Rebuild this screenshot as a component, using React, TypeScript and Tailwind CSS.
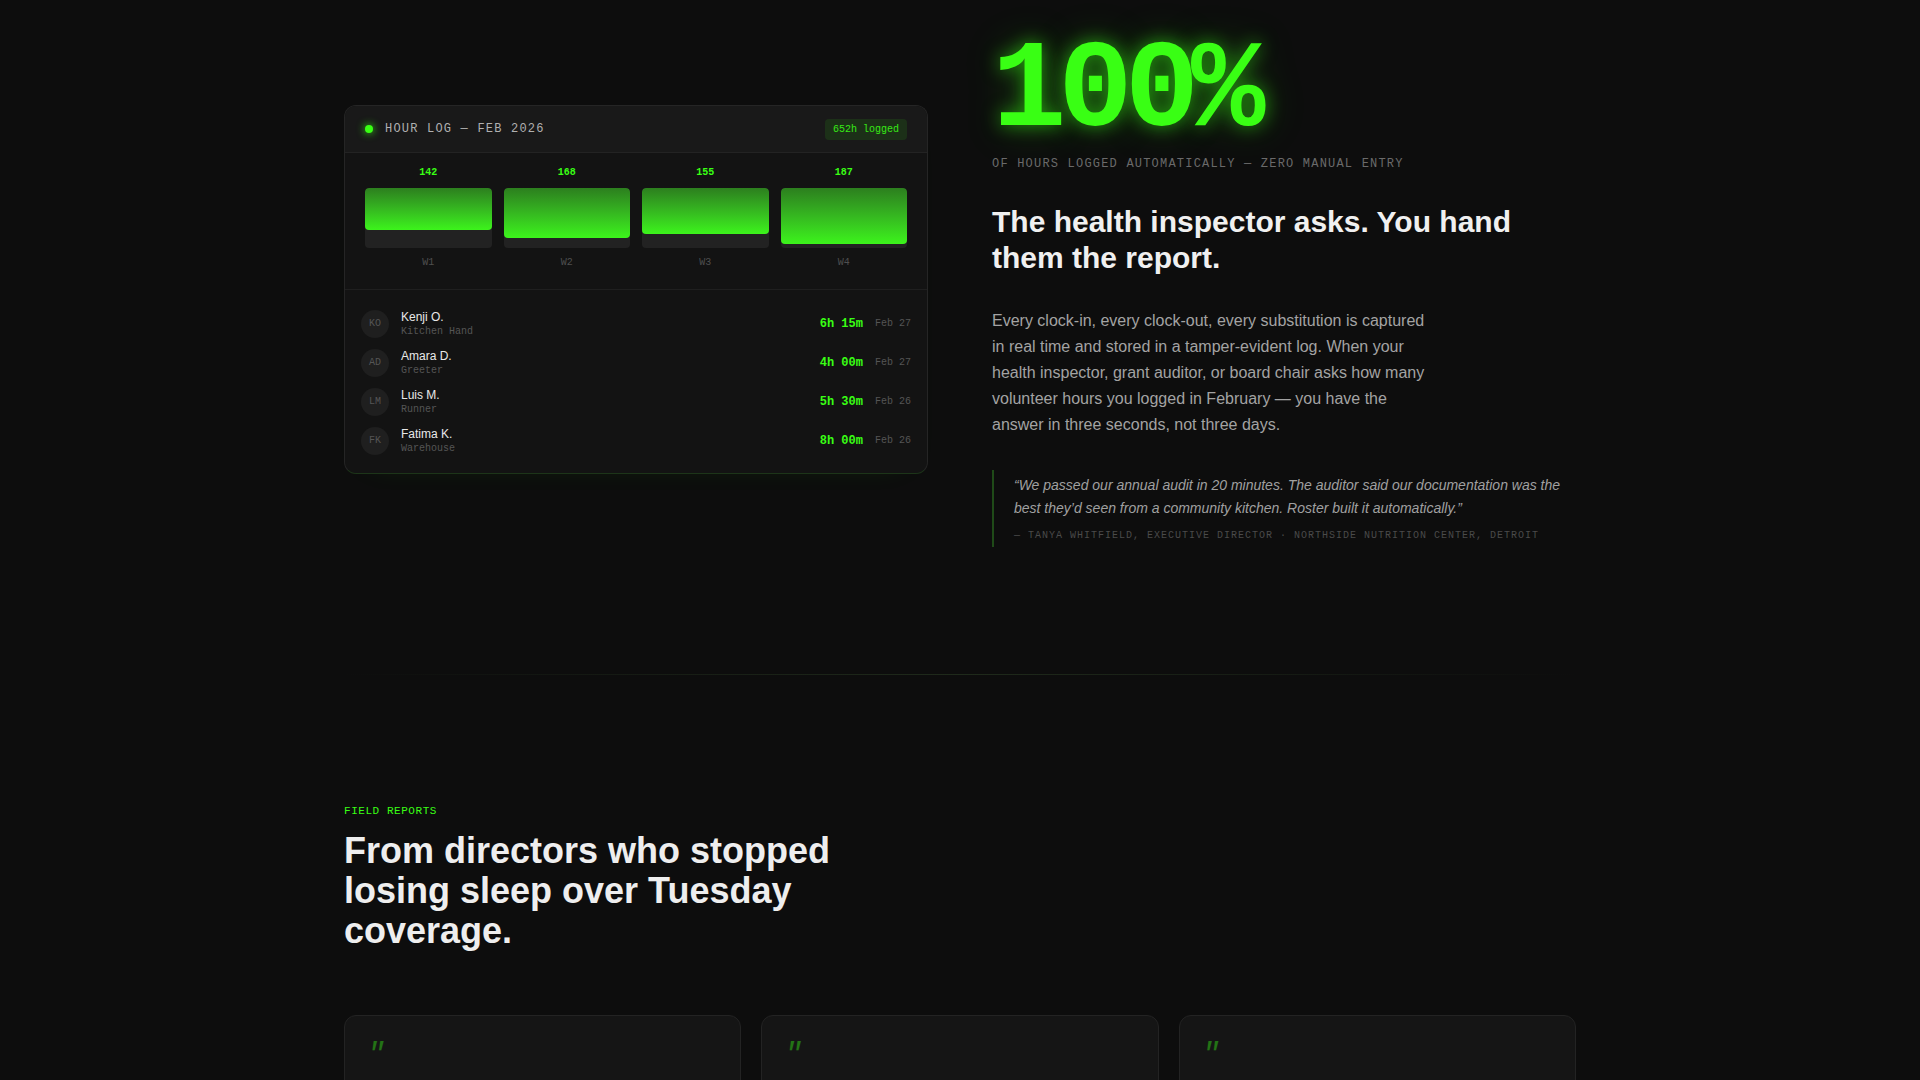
const mono = { fontFamily: '"Liberation Mono", "DejaVu Sans Mono", monospace' };

const weeks = [
  { label: "W1", value: 142 },
  { label: "W2", value: 168 },
  { label: "W3", value: 155 },
  { label: "W4", value: 187 },
];

const entries = [
  { initials: "KO", name: "Kenji O.", role: "Kitchen Hand", hours: "6h 15m", date: "Feb 27" },
  { initials: "AD", name: "Amara D.", role: "Greeter", hours: "4h 00m", date: "Feb 27" },
  { initials: "LM", name: "Luis M.", role: "Runner", hours: "5h 30m", date: "Feb 26" },
  { initials: "FK", name: "Fatima K.", role: "Warehouse", hours: "8h 00m", date: "Feb 26" },
];

const reports = [
  {
    quote: "We used to spend Monday nights texting twenty people to fill three shifts. Now the gaps fill themselves before I even see them.",
    who: "Marcus Bell",
    org: "Eastside Community Pantry",
  },
  {
    quote: "Our no-show rate dropped by half in the first month. Volunteers actually like getting the reminders.",
    who: "Priya Raman",
    org: "Harbor Meals Collective",
  },
  {
    quote: "Tuesday used to be the shift nobody wanted. Roster found us a standing crew in two weeks.",
    who: "Dolores Vega",
    org: "St. Anne's Soup Kitchen",
  },
];

function HourLogCard() {
  return (
    <div className="mt-[2px] rounded-xl border border-[#252525] border-b-[#1d3519] bg-[#131313] overflow-hidden shadow-[0_12px_30px_-26px_rgba(57,255,20,0.15)]">
      {/* header */}
      <div className="flex h-[47px] items-center justify-between border-b border-[#232323] bg-[#191919] px-5">
        <div className="flex items-center gap-3">
          <span className="h-2 w-2 rounded-full bg-[#39ff14] shadow-[0_0_8px_#39ff14]" />
          <span className="text-xs tracking-widest text-[#b0b0b0]" style={mono}>
            HOUR LOG — FEB 2026
          </span>
        </div>
        <span
          className="mt-0.5 rounded bg-[#39ff14]/10 px-2 py-[3px] text-[10px] leading-[15px] text-[#39ff14]/90"
          style={mono}
        >
          652h logged
        </span>
      </div>

      {/* weekly bars */}
      <div className="grid grid-cols-4 gap-3 border-b border-[#1f1f1f] px-5 pt-[13px] pb-[19px]">
        {weeks.map((w) => (
          <div key={w.label} className="flex flex-col items-center">
            <span className="text-[10px] leading-[14px] font-bold text-[#39ff14]" style={mono}>
              {w.value}
            </span>
            <div className="mt-2 h-[60px] w-full overflow-hidden rounded bg-[#222222]">
              <div
                className="w-full rounded bg-linear-to-b from-[#2c7f1e] to-[#3cf41b]"
                style={{ height: `${(w.value / 200) * 100}%` }}
              />
            </div>
            <span className="mt-2 text-[10px] leading-[14px] text-[#4f4f4f]" style={mono}>
              {w.label}
            </span>
          </div>
        ))}
      </div>

      {/* entries */}
      <div className="flex flex-col gap-[11px] px-4 pt-5 pb-[18px]">
        {entries.map((e) => (
          <div key={e.name} className="flex h-7 items-center gap-3">
            <div
              className="flex h-7 w-7 items-center justify-center rounded-full bg-[#1f1f1f] text-[10px] text-[#555555]"
              style={mono}
            >
              {e.initials}
            </div>
            <div className="flex flex-1 flex-col">
              <span className="text-xs leading-4 text-[#e8e8e8]">{e.name}</span>
              <span className="text-[10px] leading-[14px] text-[#555555]" style={mono}>
                {e.role}
              </span>
            </div>
            <span className="text-xs font-bold text-[#39ff14]" style={mono}>
              {e.hours}
            </span>
            <span className="text-[10px] text-[#555555]" style={mono}>
              {e.date}
            </span>
          </div>
        ))}
      </div>
    </div>
  );
}

export default function App() {
  return (
    <div
      className="min-h-screen bg-[#0d0d0d] text-[#eeeeee]"
      style={{ fontFamily: '"Liberation Sans", Arial, sans-serif' }}
    >
      {/* Audit section */}
      <section className="mx-auto max-w-7xl px-6 pt-[30px] pb-[127px]">
        <div className="grid grid-cols-2 items-center gap-16">
          <HourLogCard />

          <div>
            <div
              className="text-[124px] leading-none font-bold tracking-[-0.065em] text-[#39ff14] [text-shadow:0_0_18px_rgba(57,255,20,0.55),0_0_40px_rgba(57,255,20,0.25)]"
              style={mono}
            >
              100%
            </div>
            <p className="mt-[2px] text-xs leading-4 tracking-widest text-[#6a6a6a]" style={mono}>
              OF HOURS LOGGED AUTOMATICALLY — ZERO MANUAL ENTRY
            </p>

            <h2 className="mt-8 text-3xl font-bold text-[#f0f0f0]">
              The health inspector asks. You hand them the report.
            </h2>

            <p className="mt-8 max-w-md text-base leading-[26px] text-[#a3a3a3]">
              Every clock-in, every clock-out, every substitution is captured in real time and stored in a
              tamper-evident log. When your health inspector, grant auditor, or board chair asks how many
              volunteer hours you logged in February — you have the answer in three seconds, not three days.
            </p>

            <blockquote className="mt-8 border-l-2 border-[#1f4a18] py-1 pl-5">
              <p className="text-sm leading-relaxed text-[#a0a0a0] italic">
                “We passed our annual audit in 20 minutes. The auditor said our documentation was the best
                they’d seen from a community kitchen. Roster built it automatically.”
              </p>
              <p className="mt-2 text-[10px] leading-[15px] tracking-widest text-[#4a4a4a]" style={mono}>
                — TANYA WHITFIELD, EXECUTIVE DIRECTOR · NORTHSIDE NUTRITION CENTER, DETROIT
              </p>
            </blockquote>
          </div>
        </div>
      </section>

      {/* divider */}
      <div className="mx-auto max-w-7xl px-6">
        <div className="h-px bg-linear-to-r from-transparent via-[#1f2a1b] to-transparent" />
      </div>

      {/* Field reports */}
      <section className="mx-auto max-w-7xl px-6 pt-32 pb-32">
        <p className="text-[11px] leading-4 tracking-wider text-[#39ff14]" style={mono}>
          FIELD REPORTS
        </p>
        <h2 className="mt-3 max-w-xl text-4xl font-bold text-[#eeeeee]">
          From directors who stopped losing sleep over Tuesday coverage.
        </h2>

        <div className="mt-16 grid grid-cols-3 gap-5">
          {reports.map((r) => (
            <div key={r.who} className="rounded-xl border border-[#232323] bg-[#151515] p-6">
              <div className="-ml-0.5 text-3xl leading-[30px] text-[#39ff14]/40 italic" style={mono}>
                "
              </div>
              <p className="mt-4 text-sm leading-relaxed text-[#b5b5b5]">{r.quote}</p>
              <p className="mt-6 text-xs text-[#e8e8e8]">{r.who}</p>
              <p className="mt-1 text-[10px] tracking-widest text-[#555555] uppercase" style={mono}>
                {r.org}
              </p>
            </div>
          ))}
        </div>
      </section>
    </div>
  );
}
